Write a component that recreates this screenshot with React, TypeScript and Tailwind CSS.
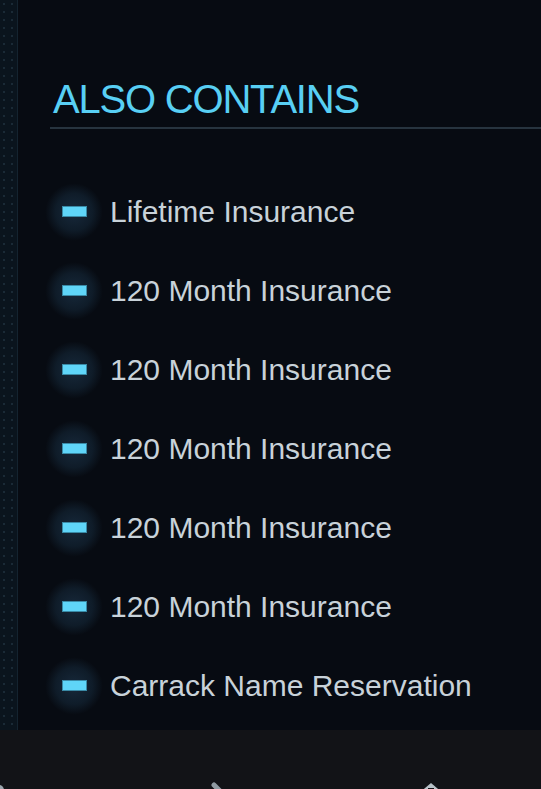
import React from "react";

const items = [
  "Lifetime Insurance",
  "120 Month Insurance",
  "120 Month Insurance",
  "120 Month Insurance",
  "120 Month Insurance",
  "120 Month Insurance",
  "Carrack Name Reservation",
];

export default function App() {
  return (
    <div
      className="w-[541px] h-[789px] overflow-hidden flex flex-col bg-[#070b12]"
      style={{ fontFamily: '"Liberation Sans", Arial, sans-serif' }}
    >
      <div className="h-[730px] shrink-0 flex flex-row">
        <div className="w-[18px] h-full bg-[#0a141d] border-r border-[#14232f] bg-[radial-gradient(#1a2a36_1px,transparent_1px)] bg-[length:8px_8px]" />
        <div className="flex-1 flex flex-col pt-[75px]">
          <div className="ml-[32px] border-b-2 border-[#27343f] pb-[4px]">
            <h2 className="pl-[3px] text-[40px] leading-[48px] text-[#58cff4] tracking-[-1.2px] font-normal">
              ALSO CONTAINS
            </h2>
          </div>
          <ul className="mt-[43px] ml-[27px] flex flex-col">
            {items.map((t, i) => (
              <li key={i} className="h-[79px] flex flex-row items-center">
                <div className="w-[58px] h-[58px] rounded-full flex items-center justify-center bg-[radial-gradient(circle,#17293b_0%,#0f1c29_45%,transparent_70%)]">
                  <div className="w-[25px] h-[11px] bg-[#5fd5f8] border border-[#3a8aa6]" />
                </div>
                <span className="ml-[7px] text-[30px] leading-[36px] text-[#c8d2d9]">
                  {t}
                </span>
              </li>
            ))}
          </ul>
        </div>
      </div>
      <div className="flex-1 min-h-0 overflow-hidden bg-[#121317] flex flex-row items-start pt-[52px]">
        <div className="ml-[-6px] w-[10px] h-[10px] mt-[3px] rounded-full bg-[#9aa5ad] shrink-0" />
        <svg className="ml-[206px] shrink-0" width="20" height="20" viewBox="0 0 20 20">
          <path d="M4 3 L14 13" stroke="#8f9aa2" strokeWidth="5" strokeLinecap="round" fill="none" />
        </svg>
        <svg className="ml-[186px] shrink-0" width="30" height="20" viewBox="0 0 30 20">
          <path d="M15 1 L28 12 L2 12 Z" fill="#b7c1c8" />
          <rect x="12" y="6" width="6" height="3" fill="#121317" />
        </svg>
      </div>
    </div>
  );
}
